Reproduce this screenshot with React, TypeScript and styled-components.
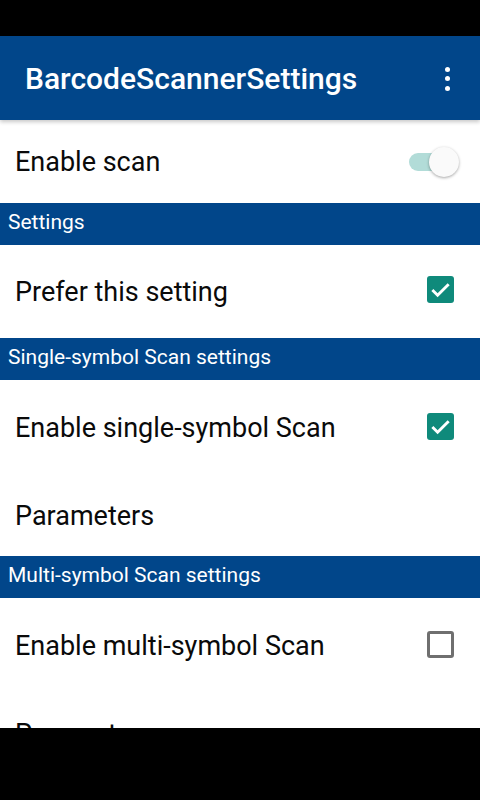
import React from "react";
import styled, { createGlobalStyle } from "styled-components";

const Global = createGlobalStyle`
  html, body { margin: 0; padding: 0; background: #000; }
  body { font-family: Roboto, "Noto Sans", "Liberation Sans", sans-serif; }
  #root { width: 480px; height: 800px; }
`;

const Screen = styled.div`
  width: 480px;
  height: 800px;
  display: flex;
  flex-direction: column;
  overflow: hidden;
  background: #fff;
`;

const StatusBar = styled.div`
  height: 36px;
  flex: none;
  background: #000;
`;

const Toolbar = styled.div`
  position: relative;
  z-index: 1;
  height: 84px;
  flex: none;
  background: #01468a;
  display: flex;
  align-items: center;
  justify-content: space-between;
  padding: 0 30px 0 25px;
  box-shadow: 0 2px 4px rgba(0, 0, 0, 0.22);
`;

const Title = styled.div`
  color: #fff;
  font-size: 30px;
  font-weight: 500;
  letter-spacing: 0;
`;

const Kebab = styled.div`
  display: flex;
  flex-direction: column;
  gap: 4.5px;
  align-items: center;
  margin-top: 1px;
`;

const Dot = styled.span`
  width: 5px;
  height: 5px;
  border-radius: 50%;
  background: #fff;
`;

const Content = styled.div`
  flex: 1;
  overflow: hidden;
  display: flex;
  flex-direction: column;
`;

const Row = styled.div<{ $h: number }>`
  height: ${(p) => p.$h}px;
  flex: none;
  display: flex;
  align-items: center;
  justify-content: space-between;
  padding: 0 25px 0 15px;
`;

const RowTitle = styled.div`
  font-size: 27px;
  color: #0a0a0a;
`;

const Header = styled.div`
  height: 42px;
  flex: none;
  box-sizing: border-box;
  background: #01468a;
  color: #fff;
  font-size: 21px;
  display: flex;
  align-items: center;
  padding: 0 8px 5px;
`;

const Box = styled.div<{ $on: boolean }>`
  width: 27px;
  height: 27px;
  box-sizing: border-box;
  border-radius: 3px;
  background: ${(p) => (p.$on ? "#0f8a7b" : "transparent")};
  border: ${(p) => (p.$on ? "none" : "3px solid #6f6f6f")};
  display: flex;
  align-items: center;
  justify-content: center;
  margin: 0 1px 4px 0;
`;

const SwitchWrap = styled.div`
  position: relative;
  width: 50px;
  height: 30px;
  margin-right: -4px;
`;

const Track = styled.div`
  position: absolute;
  left: 0;
  top: 6px;
  width: 48px;
  height: 18px;
  border-radius: 9px;
  background: #b2dcd8;
`;

const Thumb = styled.div`
  position: absolute;
  right: 0;
  top: 0;
  width: 30px;
  height: 30px;
  border-radius: 50%;
  background: #fafafa;
  box-shadow: 0 1px 3px rgba(0, 0, 0, 0.35);
`;

const NavBar = styled.div`
  height: 72px;
  flex: none;
  background: #000;
`;

const Check = ({ on }: { on: boolean }) => (
  <Box $on={on}>
    {on && (
      <svg width="23" height="23" viewBox="0 0 24 24">
        <path d="M3.5 12.5l5.5 5.5L20.5 6.5" fill="none" stroke="#fff" strokeWidth="3" />
      </svg>
    )}
  </Box>
);

export default function App() {
  return (
    <>
      <Global />
      <Screen>
        <StatusBar />
        <Toolbar>
          <Title>BarcodeScannerSettings</Title>
          <Kebab>
            <Dot />
            <Dot />
            <Dot />
          </Kebab>
        </Toolbar>
        <Content>
          <Row $h={83}>
            <RowTitle>Enable scan</RowTitle>
            <SwitchWrap>
              <Track />
              <Thumb />
            </SwitchWrap>
          </Row>
          <Header>Settings</Header>
          <Row $h={93}>
            <RowTitle>Prefer this setting</RowTitle>
            <Check on />
          </Row>
          <Header>Single-symbol Scan settings</Header>
          <Row $h={96}>
            <RowTitle>Enable single-symbol Scan</RowTitle>
            <Check on />
          </Row>
          <Row $h={80}>
            <RowTitle>Parameters</RowTitle>
          </Row>
          <Header>Multi-symbol Scan settings</Header>
          <Row $h={96}>
            <RowTitle>Enable multi-symbol Scan</RowTitle>
            <Check on={false} />
          </Row>
          <Row $h={80}>
            <RowTitle>Parameters</RowTitle>
          </Row>
        </Content>
        <NavBar />
      </Screen>
    </>
  );
}
